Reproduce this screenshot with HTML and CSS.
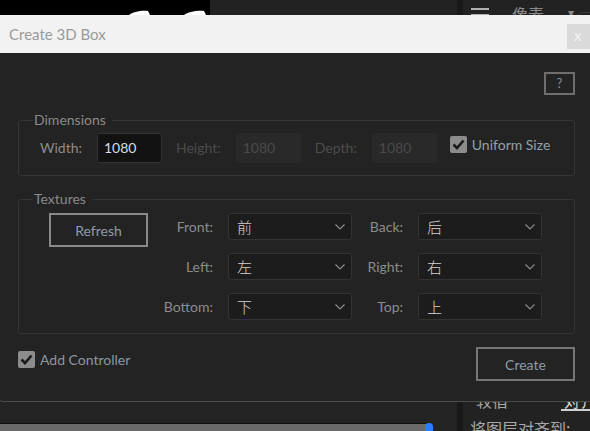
FILE: index.html
```html
<!DOCTYPE html>
<html>
<head>
<meta charset="utf-8">
<link rel="stylesheet" href="styles.css">
</head>
<body>
<div class="app">
  <div class="main">
    <div class="topstrip">
      <div class="canvas">
        <svg width="210" height="15" viewBox="0 0 210 15">
          <path d="M129 15 C133 12 141 10 148 11 L150 15 Z" fill="#fff"/>
          <path d="M184 15 C188 12 197 10 204 11 L206 15 Z" fill="#fff"/>
        </svg>
      </div>
    </div>
    <div class="main-fill"></div>
    <div class="timeline">
      <div class="tbar"></div>
      <span class="tdot"></span>
    </div>
  </div>
  <div class="sep"></div>
  <div class="panel">
    <div class="panel-head">
      <svg class="ham" width="18" height="14" viewBox="0 0 18 14"><rect x="0" y="0" width="18" height="2" fill="#b0b0b0"/><rect x="0" y="6" width="18" height="2" fill="#b0b0b0"/><rect x="0" y="12" width="18" height="2" fill="#b0b0b0"/></svg>
      <span class="unit">像素</span>
      <span class="caret">▾</span>
      <span class="pbox"></span>
    </div>
    <div class="panel-fill"></div>
    <div class="panel-foot">
      <div class="tabs"><span class="tab">较宿</span><span class="tab active">对齐</span></div>
      <div class="ptext">将图层对齐到:</div>
    </div>
  </div>
</div>

<div class="dialog">
  <div class="titlebar">
    <span class="title">Create 3D Box</span>
    <span class="close">x</span>
  </div>
  <div class="body">
    <button class="help">?</button>

    <fieldset class="group dims">
      <legend>Dimensions</legend>
      <div class="dim-row">
        <span class="lbl">Width:</span>
        <span class="num">1080</span>
        <span class="lbl dim">Height:</span>
        <span class="num off">1080</span>
        <span class="lbl dim">Depth:</span>
        <span class="num off">1080</span>
        <label class="check"><span class="box"><svg width="13" height="11" viewBox="0 0 13 11"><path d="M1.5 5.5 L5 9 L11.5 1.5" fill="none" stroke="#1a1a1a" stroke-width="2.6"/></svg></span>Uniform Size</label>
      </div>
    </fieldset>

    <fieldset class="group tex">
      <legend>Textures</legend>
      <div class="tex-grid">
        <button class="btn refresh">Refresh</button>
        <span class="lbl r">Front:</span>
        <div class="sel"><span>前</span><svg width="10" height="6" viewBox="0 0 10 6"><path d="M0.5 0.5 L5 5 L9.5 0.5" fill="none" stroke="#8a8a8a" stroke-width="1.2"/></svg></div>
        <span class="lbl r">Back:</span>
        <div class="sel"><span>后</span><svg width="10" height="6" viewBox="0 0 10 6"><path d="M0.5 0.5 L5 5 L9.5 0.5" fill="none" stroke="#8a8a8a" stroke-width="1.2"/></svg></div>

        <span class="lbl r c2">Left:</span>
        <div class="sel"><span>左</span><svg width="10" height="6" viewBox="0 0 10 6"><path d="M0.5 0.5 L5 5 L9.5 0.5" fill="none" stroke="#8a8a8a" stroke-width="1.2"/></svg></div>
        <span class="lbl r">Right:</span>
        <div class="sel"><span>右</span><svg width="10" height="6" viewBox="0 0 10 6"><path d="M0.5 0.5 L5 5 L9.5 0.5" fill="none" stroke="#8a8a8a" stroke-width="1.2"/></svg></div>

        <span class="lbl r c2">Bottom:</span>
        <div class="sel"><span>下</span><svg width="10" height="6" viewBox="0 0 10 6"><path d="M0.5 0.5 L5 5 L9.5 0.5" fill="none" stroke="#8a8a8a" stroke-width="1.2"/></svg></div>
        <span class="lbl r">Top:</span>
        <div class="sel"><span>上</span><svg width="10" height="6" viewBox="0 0 10 6"><path d="M0.5 0.5 L5 5 L9.5 0.5" fill="none" stroke="#8a8a8a" stroke-width="1.2"/></svg></div>
      </div>
    </fieldset>

    <div class="footer">
      <label class="check"><span class="box"><svg width="13" height="11" viewBox="0 0 13 11"><path d="M1.5 5.5 L5 9 L11.5 1.5" fill="none" stroke="#1a1a1a" stroke-width="2.6"/></svg></span>Add Controller</label>
      <button class="btn create">Create</button>
    </div>
  </div>
</div>
</body>
</html>
```

FILE: styles.css
```css
* { box-sizing: border-box; }
html, body { margin: 0; padding: 0; }
body {
  width: 590px;
  height: 431px;
  overflow: hidden;
  position: relative;
  background: #232323;
  font-family: Lato, "Noto Sans CJK SC", sans-serif;
}

/* background application */
.app { display: flex; width: 590px; height: 431px; }
.main { width: 457px; flex-shrink: 0; display: flex; flex-direction: column; background: #222; }
.topstrip { height: 15px; display: flex; }
.canvas { width: 210px; height: 15px; background: #000; }
.canvas svg { display: block; }
.main-fill { flex: 1; }
.timeline { height: 29px; padding-top: 21px; display: flex; align-items: flex-start; background: #232323; }
.tbar { width: 426px; height: 9px; background: #6a6a6a; border-top: 1px solid #111; }
.tdot { width: 8px; height: 10px; background: #2a7fff; border-radius: 4px 4px 0 0; margin-left: -1px; }
.sep { width: 6px; flex-shrink: 0; background: #191919; }
.panel { flex: 1; min-width: 0; overflow: hidden; display: flex; flex-direction: column; background: #222; white-space: nowrap; }
.panel-head { height: 26px; display: flex; align-items: flex-start; padding-top: 8px; }
.panel-head > * { flex-shrink: 0; }
.ham { margin-left: 8px; }
.unit { margin-left: 23px; margin-top: -3px; color: #8a8a8a; font-size: 16px; font-family: "Noto Sans CJK SC", sans-serif; line-height: 18px; }
.caret { margin-left: 24px; margin-top: -3px; color: #8a8a8a; font-size: 12px; }
.pbox { margin-left: 4px; margin-top: 4px; width: 20px; height: 20px; border: 1px solid #3a3a3a; border-radius: 4px; }
.panel-fill { flex: 1; }
.panel-foot { height: 40px; display: flex; flex-direction: column; }
.tabs { display: flex; height: 22px; }
.tab { flex-shrink: 0; color: #a8a8a8; font-size: 16px; line-height: 18px; font-family: "Noto Sans CJK SC", sans-serif; margin-left: 13px; }
.tab.active { margin-left: 53px; color: #d0d0d0; border-bottom: 2px solid #d0d0d0; padding-left: 3px; width: 40px; height: 20px; }
.ptext { margin-left: 7px; margin-top: 8px; color: #a8a8a8; font-size: 16px; line-height: 18px; font-family: "Noto Sans CJK SC", sans-serif; }

/* dialog */
.dialog {
  position: absolute;
  top: 15px;
  left: -1px;
  width: 600px;
  height: 387px;
  display: flex;
  flex-direction: column;
  background: #232323;
  border: 1px solid #4c4c4c;
  border-top: none;
  border-radius: 0 0 4px 4px;
}
.titlebar { height: 38px; background: #f2f2f2; display: flex; align-items: flex-start; padding-left: 9px; }
.title { color: #9a9a9a; font-size: 15px; line-height: 38px; }
.close {
  margin-left: auto;
  margin-top: 9px;
  margin-right: 1px;
  width: 30px;
  height: 25px;
  background: #dadada;
  color: #f4f4f4;
  font-size: 15px;
  line-height: 23px;
  padding-left: 7px;
}
.body { flex: 1; display: flex; flex-direction: column; padding: 19px 23px 0 18px; }
.help {
  align-self: flex-end;
  width: 31px;
  height: 23px;
  border: 2px solid #6e6e6e;
  background: transparent;
  color: #8290a8;
  font-family: Lato, sans-serif;
  font-size: 13px;
  padding: 0;
  line-height: 19px;
}

.group {
  margin: 0;
  border: 1px solid #353535;
  border-radius: 3px;
  padding: 5px 0 12px 14px;
  min-width: 0;
}
.group legend {
  padding: 0 6px 0 1px;
  color: #8a8a8a;
  font-size: 14px;
  line-height: 16px;
}
.dims { margin-top: 17px; }
.tex { margin-top: 15px; padding-top: 6px; padding-bottom: 13px; }

.lbl { color: #8c8c8c; font-size: 14px; line-height: 16px; }
.lbl.dim { color: #4c4c4c; }
.dim-row { display: flex; align-items: center; margin-left: 7px; height: 30px; }
.dim-row .lbl { margin-right: 15px; }
.num {
  width: 65px;
  height: 30px;
  background: #121212;
  border: 1px solid #333;
  border-radius: 2px;
  color: #d2dce6;
  font-size: 14px;
  line-height: 28px;
  padding-left: 6px;
  margin-right: 14px;
}
.num.off { background: #292929; border-color: #292929; color: #4a4a4a; }
.check { display: flex; align-items: center; color: #94a0aa; font-size: 14px; line-height: 16px; }
.dim-row .check { align-self: flex-start; margin-top: 3px; margin-left: -1px; }
.box {
  width: 17px;
  height: 17px;
  background: #8c8c8c;
  border-radius: 2px;
  margin-right: 5px;
  display: flex;
  align-items: center;
  justify-content: center;
}

.tex-grid {
  display: grid;
  grid-template-columns: 99px 50px 124px 36px 124px;
  grid-auto-rows: 27px;
  column-gap: 15px;
  row-gap: 13px;
  margin-left: 16px;
  align-items: center;
}
.lbl.r { text-align: right; white-space: nowrap; }
.c2 { grid-column: 2; }
.refresh { grid-row: 1 / span 2; align-self: start; }
.btn {
  width: 99px;
  height: 34px;
  border: 2px solid #8a8a8a;
  background: transparent;
  color: #8f9ba6;
  font-family: Lato, sans-serif;
  font-size: 14px;
  padding: 0;
}
.sel {
  height: 27px;
  background: #1c1c1c;
  border: 1px solid #333;
  border-radius: 3px;
  display: flex;
  align-items: center;
  justify-content: space-between;
  padding: 0 6px 0 8px;
  color: #d4d4d4;
  font-family: "Noto Sans CJK SC", sans-serif;
  font-size: 15px;
  font-weight: 300;
}
.sel svg { margin-top: 1px; }

.footer { display: flex; align-items: flex-start; justify-content: space-between; margin-top: 13px; }
.footer .check { margin-top: 4px; color: #8c96a0; }
.create { border-color: #767676; }
```
